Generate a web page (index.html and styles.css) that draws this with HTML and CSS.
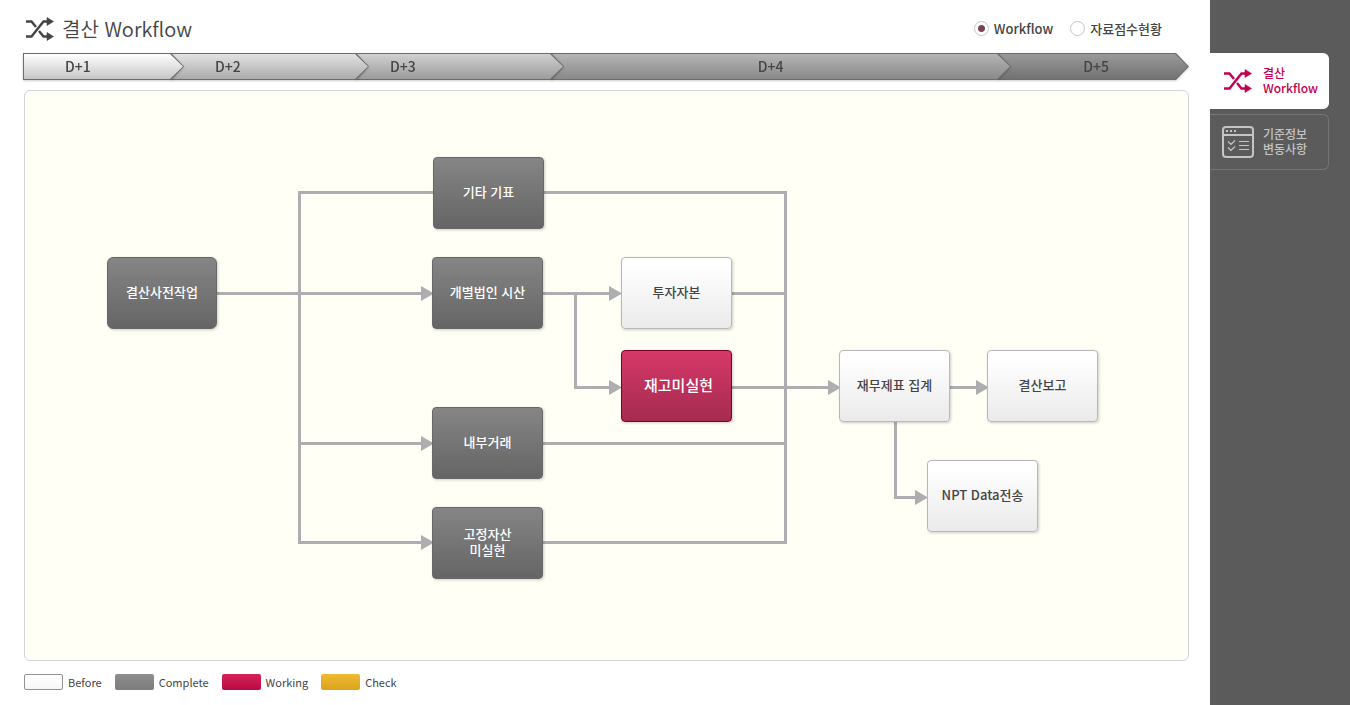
FILE: index.html
```html
<!DOCTYPE html>
<html lang="ko">
<head>
<meta charset="utf-8">
<title>결산 Workflow</title>
<link rel="stylesheet" href="styles.css">
</head>
<body>
<svg class="sprite" aria-hidden="true">
  <symbol id="shuffle" viewBox="0 0 28 24">
    <path d="M0 4.500h5.500l4.500 5.500M0 19.500h5.500L17.500 4.500H22M13 14l4.500 5.500H22" fill="none" stroke="currentColor" stroke-width="2.400"/>
    <path d="M21 0.500L27.500 4.500L21 8.500zM21 15.500L27.500 19.500L21 23.500z" fill="currentColor" stroke="currentColor" stroke-width="0.600"/>
  </symbol>
</svg>
<div class="app">
  <main class="main">
    <header class="header">
      <h1 class="title"><svg class="title-icon" aria-hidden="true"><use href="#shuffle"/></svg>결산 Workflow</h1>
      <form class="views">
        <label class="view"><input type="radio" name="view" checked>Workflow</label>
        <label class="view"><input type="radio" name="view">자료점수현황</label>
      </form>
    </header>

    <ol class="steps">
      <li class="step step-1"><span class="edge"><span class="face">D+1</span></span></li>
      <li class="step step-2"><span class="edge"><span class="face">D+2</span></span></li>
      <li class="step step-3"><span class="edge"><span class="face">D+3</span></span></li>
      <li class="step step-4"><span class="edge"><span class="face">D+4</span></span></li>
      <li class="step step-5"><span class="edge"><span class="face">D+5</span></span></li>
    </ol>

    <section class="canvas">
      <svg class="links" width="1163" height="569" viewBox="25 91 1163 569" aria-hidden="true">
        <g class="wires">
          <path d="M217 293.500H425"/>
          <path d="M433 192.500H299.500V542.500H425"/>
          <path d="M299.500 443.500H425"/>
          <path d="M544 192.500H785.500V542.500H543"/>
          <path d="M543 293.500H612"/>
          <path d="M575.500 293.500V387.500H612"/>
          <path d="M732 293.500H785"/>
          <path d="M732 387.500H830"/>
          <path d="M543 443.500H785"/>
          <path d="M950 387.500H978"/>
          <path d="M895.500 422V497.500H917"/>
        </g>
        <g class="heads">
          <path d="M421 286l13 7.500l-13 7.500z"/>
          <path d="M421 436l13 7.500l-13 7.500z"/>
          <path d="M421 535l13 7.500l-13 7.500z"/>
          <path d="M609 286l13 7.500l-13 7.500z"/>
          <path d="M609 380l13 7.500l-13 7.500z"/>
          <path d="M828 380l13 7.500l-13 7.500z"/>
          <path d="M976 380l13 7.500l-13 7.500z"/>
          <path d="M915 490l13 7.500l-13 7.500z"/>
        </g>
      </svg>
      <button type="button" class="node complete node-prepare">결산사전작업</button>
      <button type="button" class="node complete node-other">기타 기표</button>
      <button type="button" class="node complete node-trial">개별법인 시산</button>
      <button type="button" class="node complete node-internal">내부거래</button>
      <button type="button" class="node complete node-asset">고정자산<br>미실현</button>
      <button type="button" class="node before node-invest">투자자본</button>
      <button type="button" class="node working node-stock">재고미실현</button>
      <button type="button" class="node before node-statement">재무제표 집계</button>
      <button type="button" class="node before node-report">결산보고</button>
      <button type="button" class="node before node-npt">NPT Data전송</button>
    </section>

    <ul class="legend">
      <li><i class="swatch swatch-before"></i>Before</li>
      <li><i class="swatch swatch-complete"></i>Complete</li>
      <li><i class="swatch swatch-working"></i>Working</li>
      <li><i class="swatch swatch-check"></i>Check</li>
    </ul>
  </main>

  <nav class="side">
    <a class="tab active" href="#workflow">
      <svg class="tab-icon" aria-hidden="true" viewBox="0 0 32 32"><use href="#shuffle" x="2" y="4" width="28" height="24"/></svg>
      <span class="tab-label">결산<br>Workflow</span>
    </a>
    <a class="tab" href="#changes">
      <svg class="tab-icon" aria-hidden="true" viewBox="0 0 32 32" fill="none" stroke="currentColor">
        <rect x="1" y="1" width="30" height="30" rx="3" stroke-width="2"/>
        <path d="M1 9h30" stroke-width="2"/>
        <path d="M4 5h2M8 5h2M12 5h2" stroke-width="2"/>
        <path d="M17 15.500h10M17 19.500h10M17 23.500h10M6 15.500l3 3l4-4M6 21.500l3 3l4-4" stroke-width="1.200"/>
      </svg>
      <span class="tab-label">기준정보<br>변동사항</span>
    </a>
  </nav>
</div>
</body>
</html>
```
FILE: styles.css
```css
* { box-sizing: border-box; }

body {
  margin: 0;
  color: #444;
  background: #fff;
  font-family: "Noto Sans CJK KR", "Noto Sans", sans-serif;
  font-size: 13px;
  font-weight: 500;
}

.sprite { display: none; }

.app { display: flex; min-height: 100vh; }

.main {
  display: flex;
  flex: 1;
  flex-direction: column;
  padding: 0 21px 14px 23px;
}

.header {
  display: flex;
  align-items: center;
  justify-content: space-between;
  height: 53px;
  padding: 4px 27px 0 3px;
}

.title {
  display: flex;
  align-items: center;
  gap: 8px;
  margin: 0;
  font-size: 20px;
  font-weight: 350;
  line-height: 28px;
}
.title-icon { width: 28px; height: 24px; }

.views { display: flex; gap: 17px; }
.view { display: flex; align-items: center; gap: 5px; line-height: 20px; }
.view input {
  appearance: none;
  width: 15px;
  height: 15px;
  margin: 0;
  border: 1px solid #c4c4c4;
  border-radius: 50%;
  background: #fff;
}
.view input:checked { background: radial-gradient(circle, #7d4058 3px, #fff 4px); }

.steps {
  display: flex;
  height: 27px;
  margin: 0;
  padding: 0;
  list-style: none;
  font-size: 14px;
}
.step {
  position: relative;
  min-width: 0;
  margin-right: -13px;
  filter: drop-shadow(0 1px 1px rgba(0, 0, 0, 0.2));
}
.edge, .face {
  display: block;
  height: 100%;
  clip-path: polygon(0 0, calc(100% - 13px) 0, 100% 50%, calc(100% - 13px) 100%, 0 100%);
}
.edge { padding: 1px 1px 1px 0; background: #6c6c6c; }
.face { line-height: 24px; }
.step-1 { z-index: 5; flex: 161 0 0; }
.step-2 { z-index: 4; flex: 198 0 0; }
.step-3 { z-index: 3; flex: 208 0 0; }
.step-4 { z-index: 2; flex: 460 0 0; }
.step-5 { z-index: 1; flex: 191 0 0; margin-right: 0; }
.step-1 .edge { padding-left: 1px; }
.step-1 .face { padding-left: 41px; background: linear-gradient(#fff, #c6c6c6); }
.step-2 .face { padding-left: 44px; background: linear-gradient(#e2e2e2, #ababab); }
.step-3 .face { padding-left: 34px; background: linear-gradient(#d0d0d0, #9c9c9c); }
.step-4 .face { padding-right: 20px; text-align: center; background: linear-gradient(#b5b5b5, #898989); }
.step-5 .face { padding-left: 6px; text-align: center; background: linear-gradient(#999, #727272); }

.canvas {
  position: relative;
  flex: 1;
  min-height: 571px;
  margin: 10px 0 0 1px;
  border: 1px solid #d4d4d8;
  border-radius: 6px;
  background: #fffff6;
}
.links { display: block; }
.wires { fill: none; stroke: #aeaeb0; stroke-width: 3; }
.heads { fill: #aeaeb0; }

.node {
  position: absolute;
  width: 111px;
  height: 72px;
  padding: 0 0 3px;
  border: 1px solid;
  border-radius: 4px;
  box-shadow: 1px 1px 3px rgba(0, 0, 0, 0.2);
  font: inherit;
  line-height: 16px;
}
.before { color: #444; border-color: #b8b8ba; background: linear-gradient(#fff 10%, #eaeaea); }
.complete { color: #fff; border-color: #686868; background: linear-gradient(#858585, #656565); }
.working {
  color: #fff;
  border-color: #7c0028;
  background: linear-gradient(#d63868, #a52b50);
  font-size: 15px;
}
.node-prepare { left: 82px; top: 166px; width: 110px; border-radius: 6px; }
.node-other { left: 408px; top: 66px; }
.node-trial { left: 407px; top: 166px; }
.node-internal { left: 407px; top: 316px; }
.node-asset { left: 407px; top: 416px; }
.node-invest { left: 596px; top: 166px; }
.node-stock { left: 596px; top: 259px; padding-left: 4px; }
.node-statement { left: 814px; top: 259px; }
.node-report { left: 962px; top: 259px; }
.node-npt { left: 902px; top: 369px; }

.legend {
  display: flex;
  gap: 13px;
  margin: 13px 0 0 1px;
  padding: 0;
  list-style: none;
  font-size: 11px;
  font-weight: 400;
  line-height: 17px;
}
.legend li { display: flex; align-items: flex-start; gap: 5px; }
.swatch { width: 39px; height: 16px; border-radius: 2px; }
.swatch-before { border: 1px solid #929292; background: linear-gradient(#fff, #f6f6f6); }
.swatch-complete { background: linear-gradient(#8e8e8e, #7c7c7c); }
.swatch-working { background: linear-gradient(#d5215a, #b90b42); }
.swatch-check { background: linear-gradient(#efbb32, #d9a41b); }

.side {
  display: flex;
  flex: 0 0 140px;
  flex-direction: column;
  gap: 5px;
  padding: 53px 21px 0 0;
  background: #5b5b5b;
}
.tab {
  display: flex;
  align-items: center;
  gap: 9px;
  height: 56px;
  padding-left: 12px;
  border: 1px solid #757575;
  border-left: 0;
  border-radius: 0 6px 6px 0;
  color: #c4c4c4;
  font-size: 12px;
  line-height: 15px;
  text-decoration: none;
}
.tab.active { color: #c3004f; border-color: #fff; background: #fff; }
.tab-icon { flex: none; width: 32px; height: 32px; }
.tab-label { padding-bottom: 2px; }
```
